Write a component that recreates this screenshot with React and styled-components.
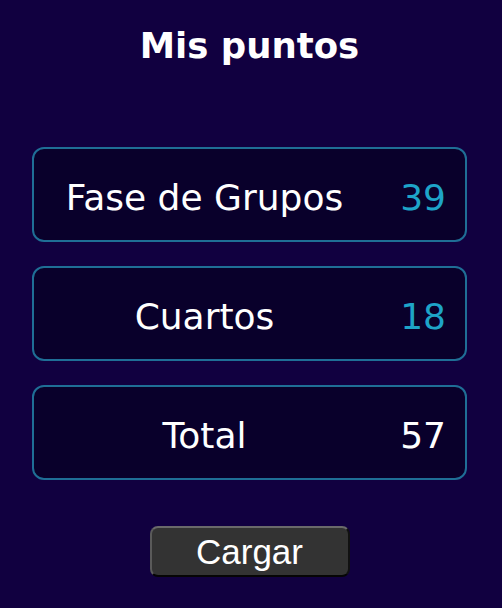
import styled, { createGlobalStyle } from 'styled-components'

const GlobalStyle = createGlobalStyle`
	html, body {
		margin: 0;
		padding: 0;
		background: #110040;
	}
`

const Page = styled.div`
	width: 502px;
	height: 608px;
	box-sizing: border-box;
	padding: 26px 35px 0 32px;
	display: flex;
	flex-direction: column;
	align-items: stretch;
	background: #110040;
	font-family: 'DejaVu Sans', Verdana, sans-serif;
`

const Title = styled.h1`
	margin: 0 0 81px;
	text-align: center;
	color: #fff;
	font-size: 35.5px;
	font-weight: bold;
	line-height: 40px;
`

const List = styled.div`
	display: flex;
	flex-direction: column;
	gap: 24px;
`

const Card = styled.div`
	height: 95px;
	box-sizing: border-box;
	display: flex;
	align-items: center;
	padding: 5px 19px 0 21px;
	border: 2px solid #1f6e96;
	border-radius: 12px;
	background: #09002b;
`

const Label = styled.span`
	flex: 1;
	text-align: center;
	color: #fff;
	font-size: 36px;
`

const Value = styled.span`
	width: 92px;
	text-align: right;
	color: ${({ $accent }) => ($accent ? '#1ea4c8' : '#fff')};
	font-size: 36px;
`

const Footer = styled.div`
	display: flex;
	justify-content: center;
	margin-top: 46px;
`

const Button = styled.button`
	width: 200px;
	height: 51px;
	box-sizing: border-box;
	border: 2px solid;
	border-color: #6a6a6a #111 #050505 #5a5a5a;
	border-radius: 8px;
	background: #333333;
	color: #fff;
	font-family: 'Liberation Sans', Arial, sans-serif;
	font-size: 35px;
	line-height: 1;
	padding: 0;
	cursor: pointer;
`

const rows = [
	{ label: 'Fase de Grupos', value: 39, accent: true },
	{ label: 'Cuartos', value: 18, accent: true },
	{ label: 'Total', value: 57, accent: false },
]

export default function App() {
	return (
		<>
			<GlobalStyle />
			<Page>
				<Title>Mis puntos</Title>
				<List>
					{rows.map((row) => (
						<Card key={row.label}>
							<Label>{row.label}</Label>
							<Value $accent={row.accent}>{row.value}</Value>
						</Card>
					))}
				</List>
				<Footer>
					<Button>Cargar</Button>
				</Footer>
			</Page>
		</>
	)
}
